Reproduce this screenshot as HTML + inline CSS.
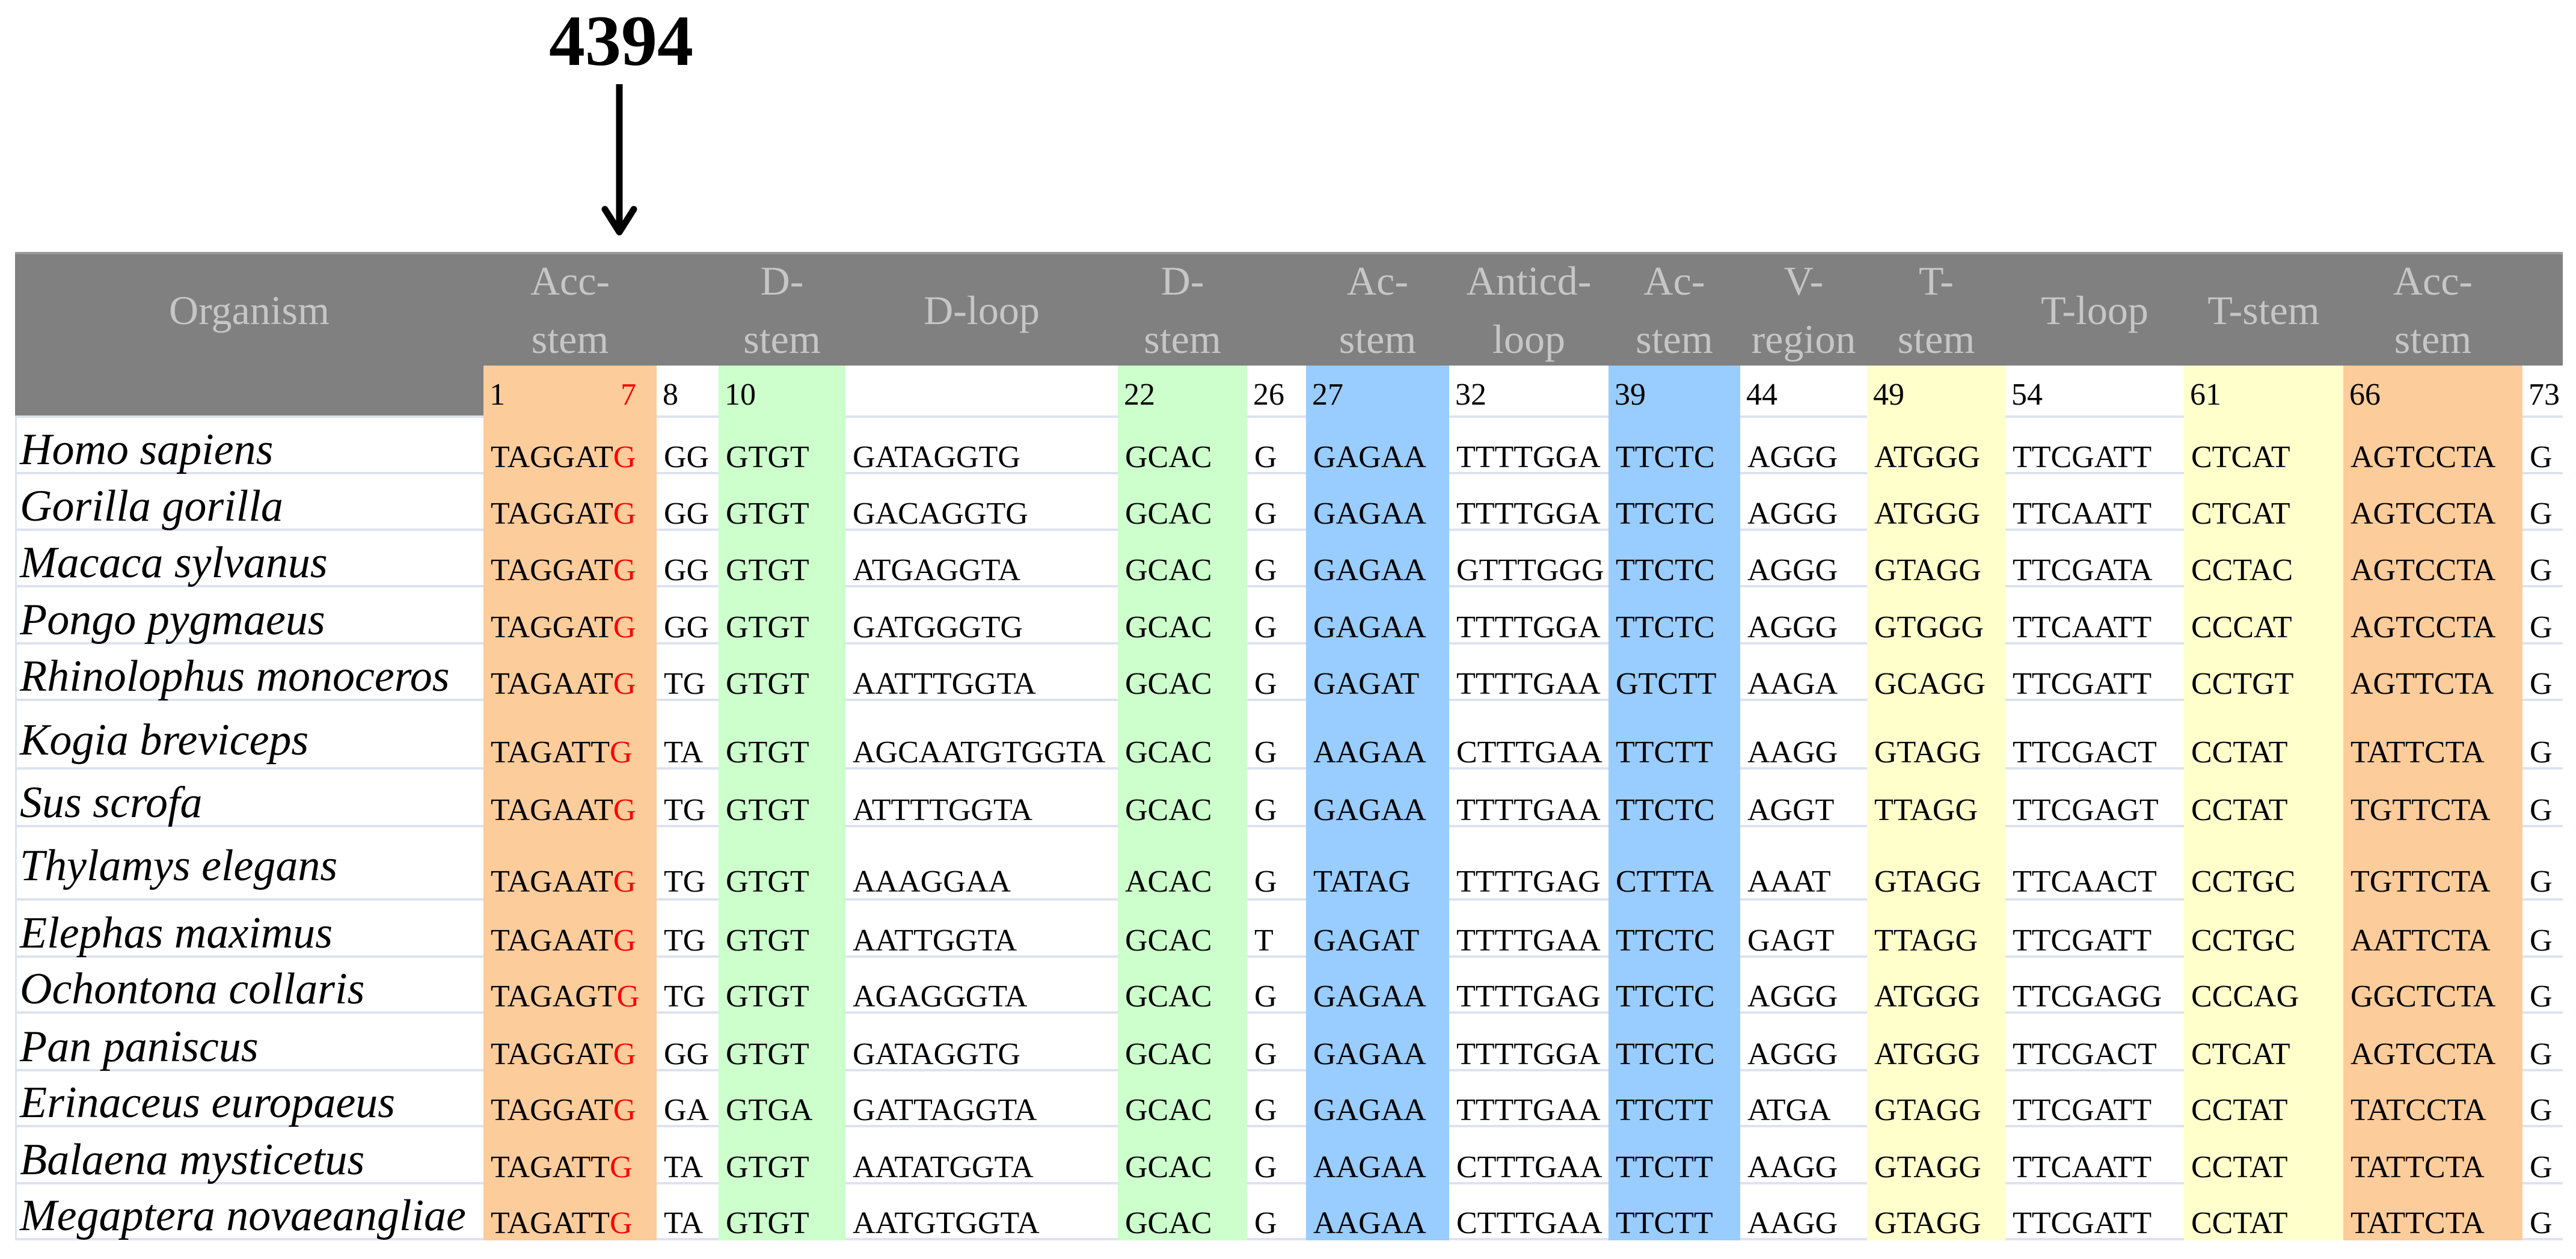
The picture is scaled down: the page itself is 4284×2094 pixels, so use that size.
<!DOCTYPE html>
<html><head><meta charset="utf-8"><style>
html,body{margin:0;padding:0;background:#fff;width:4284px;height:2094px;overflow:hidden;position:relative;font-family:"Liberation Serif",serif}
.a{position:absolute}
.ln{position:absolute;left:25px;width:4237px;height:4px;background:#dde3ee}
table{position:absolute;left:25px;top:419px;width:4237px;table-layout:fixed;border-collapse:collapse}
td{padding:0;white-space:nowrap;overflow:visible}
tr.h td{height:189px;color:#c6c6c6;font-size:68px;line-height:97px;text-align:center;vertical-align:middle}
tr.n td{height:87px;font-size:52px;line-height:87px;vertical-align:middle;padding-left:10px}
tr.d td{vertical-align:bottom;font-size:52px;line-height:62px;padding-left:12px;padding-bottom:2px}
tr.d td:first-child{font-style:italic;font-size:74px;line-height:66px;padding-left:8px;padding-bottom:13px}
b{font-weight:normal;color:#f00}
</style></head><body>
<div class="a" style="left:913px;top:8px;font-size:120px;font-weight:bold;line-height:120px">4394</div>
<svg class="a" style="left:990px;top:130px" width="80" height="270"><line x1="40" y1="10" x2="40" y2="252" stroke="#000" stroke-width="11"/><polyline points="16,218 40,256 64,218" fill="none" stroke="#000" stroke-width="11" stroke-linecap="round" stroke-linejoin="round"/></svg>
<div class="a" style="left:25px;top:419px;width:4237px;height:189px;background:#808080"></div>
<div class="a" style="left:25px;top:419px;width:4237px;height:4px;background:#999"></div>
<div class="a" style="left:25px;top:608px;width:779px;height:87px;background:#808080"></div>
<div class="ln" style="top:691px"></div><div class="ln" style="top:785px"></div><div class="ln" style="top:879px"></div><div class="ln" style="top:973px"></div><div class="ln" style="top:1068px"></div><div class="ln" style="top:1162px"></div><div class="ln" style="top:1276px"></div><div class="ln" style="top:1372px"></div><div class="ln" style="top:1494px"></div><div class="ln" style="top:1589px"></div><div class="ln" style="top:1682px"></div><div class="ln" style="top:1778px"></div><div class="ln" style="top:1871px"></div><div class="ln" style="top:1966px"></div><div class="ln" style="top:2059px"></div>
<div class="a" style="left:25px;top:695px;width:3px;height:1368px;background:#dde3ee"></div>
<div class="a" style="left:804px;top:608px;width:288px;height:1455px;background:#fdcc9b"></div>
<div class="a" style="left:1195px;top:608px;width:211px;height:1455px;background:#ccffcc"></div>
<div class="a" style="left:1859px;top:608px;width:215px;height:1455px;background:#ccffcc"></div>
<div class="a" style="left:2172px;top:608px;width:238px;height:1455px;background:#99ccff"></div>
<div class="a" style="left:2675px;top:608px;width:219px;height:1455px;background:#99ccff"></div>
<div class="a" style="left:3105px;top:608px;width:230px;height:1455px;background:#ffffcc"></div>
<div class="a" style="left:3632px;top:608px;width:265px;height:1455px;background:#ffffcc"></div>
<div class="a" style="left:3897px;top:608px;width:298px;height:1455px;background:#fdcc9b"></div>
<table>
<colgroup><col style="width:779px"><col style="width:288px"><col style="width:103px"><col style="width:211px"><col style="width:453px"><col style="width:215px"><col style="width:98px"><col style="width:238px"><col style="width:265px"><col style="width:219px"><col style="width:211px"><col style="width:230px"><col style="width:297px"><col style="width:265px"><col style="width:298px"><col style="width:67px"></colgroup>
<tr class="h"><td>Organism</td><td>Acc-<br>stem</td><td></td><td>D-<br>stem</td><td>D-loop</td><td>D-<br>stem</td><td></td><td>Ac-<br>stem</td><td>Anticd-<br>loop</td><td>Ac-<br>stem</td><td>V-<br>region</td><td>T-<br>stem</td><td>T-loop</td><td>T-stem</td><td>Acc-<br>stem</td><td></td></tr>
<tr class="n"><td></td><td>1<span style="float:right;color:#f00;margin-right:34px">7</span></td><td>8</td><td>10</td><td></td><td>22</td><td>26</td><td>27</td><td>32</td><td>39</td><td>44</td><td>49</td><td>54</td><td>61</td><td>66</td><td>73</td></tr>
<tr class="d" style="height:94px"><td>Homo sapiens</td><td>TAGGAT<b>G</b></td><td>GG</td><td>GTGT</td><td>GATAGGTG</td><td>GCAC</td><td>G</td><td>GAGAA</td><td>TTTTGGA</td><td>TTCTC</td><td>AGGG</td><td>ATGGG</td><td>TTCGATT</td><td>CTCAT</td><td>AGTCCTA</td><td>G</td></tr>
<tr class="d" style="height:94px"><td>Gorilla gorilla</td><td>TAGGAT<b>G</b></td><td>GG</td><td>GTGT</td><td>GACAGGTG</td><td>GCAC</td><td>G</td><td>GAGAA</td><td>TTTTGGA</td><td>TTCTC</td><td>AGGG</td><td>ATGGG</td><td>TTCAATT</td><td>CTCAT</td><td>AGTCCTA</td><td>G</td></tr>
<tr class="d" style="height:94px"><td>Macaca sylvanus</td><td>TAGGAT<b>G</b></td><td>GG</td><td>GTGT</td><td>ATGAGGTA</td><td>GCAC</td><td>G</td><td>GAGAA</td><td>GTTTGGG</td><td>TTCTC</td><td>AGGG</td><td>GTAGG</td><td>TTCGATA</td><td>CCTAC</td><td>AGTCCTA</td><td>G</td></tr>
<tr class="d" style="height:95px"><td>Pongo pygmaeus</td><td>TAGGAT<b>G</b></td><td>GG</td><td>GTGT</td><td>GATGGGTG</td><td>GCAC</td><td>G</td><td>GAGAA</td><td>TTTTGGA</td><td>TTCTC</td><td>AGGG</td><td>GTGGG</td><td>TTCAATT</td><td>CCCAT</td><td>AGTCCTA</td><td>G</td></tr>
<tr class="d" style="height:94px"><td>Rhinolophus monoceros</td><td>TAGAAT<b>G</b></td><td>TG</td><td>GTGT</td><td>AATTTGGTA</td><td>GCAC</td><td>G</td><td>GAGAT</td><td>TTTTGAA</td><td>GTCTT</td><td>AAGA</td><td>GCAGG</td><td>TTCGATT</td><td>CCTGT</td><td>AGTTCTA</td><td>G</td></tr>
<tr class="d" style="height:114px"><td style="padding-bottom:21px">Kogia breviceps</td><td>TAGATT<b>G</b></td><td>TA</td><td>GTGT</td><td>AGCAATGTGGTA</td><td>GCAC</td><td>G</td><td>AAGAA</td><td>CTTTGAA</td><td>TTCTT</td><td>AAGG</td><td>GTAGG</td><td>TTCGACT</td><td>CCTAT</td><td>TATTCTA</td><td>G</td></tr>
<tr class="d" style="height:96px"><td>Sus scrofa</td><td>TAGAAT<b>G</b></td><td>TG</td><td>GTGT</td><td>ATTTTGGTA</td><td>GCAC</td><td>G</td><td>GAGAA</td><td>TTTTGAA</td><td>TTCTC</td><td>AGGT</td><td>TTAGG</td><td>TTCGAGT</td><td>CCTAT</td><td>TGTTCTA</td><td>G</td></tr>
<tr class="d" style="height:122px"><td style="padding-bottom:30px">Thylamys elegans</td><td style="padding-bottom:5px">TAGAAT<b>G</b></td><td style="padding-bottom:5px">TG</td><td style="padding-bottom:5px">GTGT</td><td style="padding-bottom:5px">AAAGGAA</td><td style="padding-bottom:5px">ACAC</td><td style="padding-bottom:5px">G</td><td style="padding-bottom:5px">TATAG</td><td style="padding-bottom:5px">TTTTGAG</td><td style="padding-bottom:5px">CTTTA</td><td style="padding-bottom:5px">AAAT</td><td style="padding-bottom:5px">GTAGG</td><td style="padding-bottom:5px">TTCAACT</td><td style="padding-bottom:5px">CCTGC</td><td style="padding-bottom:5px">TGTTCTA</td><td style="padding-bottom:5px">G</td></tr>
<tr class="d" style="height:95px"><td>Elephas maximus</td><td>TAGAAT<b>G</b></td><td>TG</td><td>GTGT</td><td>AATTGGTA</td><td>GCAC</td><td>T</td><td>GAGAT</td><td>TTTTGAA</td><td>TTCTC</td><td>GAGT</td><td>TTAGG</td><td>TTCGATT</td><td>CCTGC</td><td>AATTCTA</td><td>G</td></tr>
<tr class="d" style="height:93px"><td>Ochontona collaris</td><td>TAGAGT<b>G</b></td><td>TG</td><td>GTGT</td><td>AGAGGGTA</td><td>GCAC</td><td>G</td><td>GAGAA</td><td>TTTTGAG</td><td>TTCTC</td><td>AGGG</td><td>ATGGG</td><td>TTCGAGG</td><td>CCCAG</td><td>GGCTCTA</td><td>G</td></tr>
<tr class="d" style="height:96px"><td>Pan paniscus</td><td>TAGGAT<b>G</b></td><td>GG</td><td>GTGT</td><td>GATAGGTG</td><td>GCAC</td><td>G</td><td>GAGAA</td><td>TTTTGGA</td><td>TTCTC</td><td>AGGG</td><td>ATGGG</td><td>TTCGACT</td><td>CTCAT</td><td>AGTCCTA</td><td>G</td></tr>
<tr class="d" style="height:93px"><td>Erinaceus europaeus</td><td>TAGGAT<b>G</b></td><td>GA</td><td>GTGA</td><td>GATTAGGTA</td><td>GCAC</td><td>G</td><td>GAGAA</td><td>TTTTGAA</td><td>TTCTT</td><td>ATGA</td><td>GTAGG</td><td>TTCGATT</td><td>CCTAT</td><td>TATCCTA</td><td>G</td></tr>
<tr class="d" style="height:95px"><td>Balaena mysticetus</td><td>TAGATT<b>G</b></td><td>TA</td><td>GTGT</td><td>AATATGGTA</td><td>GCAC</td><td>G</td><td>AAGAA</td><td>CTTTGAA</td><td>TTCTT</td><td>AAGG</td><td>GTAGG</td><td>TTCAATT</td><td>CCTAT</td><td>TATTCTA</td><td>G</td></tr>
<tr class="d" style="height:93px"><td>Megaptera novaeangliae</td><td>TAGATT<b>G</b></td><td>TA</td><td>GTGT</td><td>AATGTGGTA</td><td>GCAC</td><td>G</td><td>AAGAA</td><td>CTTTGAA</td><td>TTCTT</td><td>AAGG</td><td>GTAGG</td><td>TTCGATT</td><td>CCTAT</td><td>TATTCTA</td><td>G</td></tr>
</table>
</body></html>
